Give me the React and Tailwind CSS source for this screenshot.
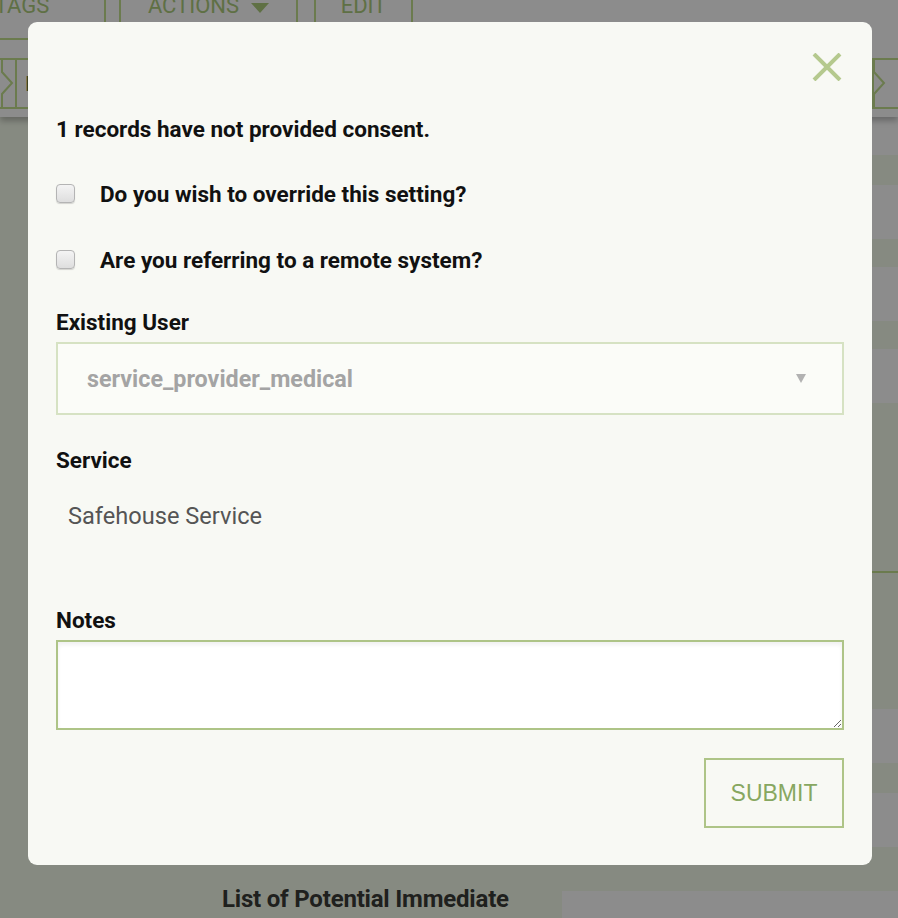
import React from "react";

const rows = [
  { h: "h-[38px]", bg: "bg-white" },
  { h: "h-[30px]", bg: "bg-[#f5fbec]" },
  { h: "h-[54px]", bg: "bg-white" },
  { h: "h-[28px]", bg: "bg-[#f5fbec]" },
  { h: "h-[54px]", bg: "bg-white" },
  { h: "h-[28px]", bg: "bg-[#f5fbec]" },
  { h: "h-[54px]", bg: "bg-white" },
  { h: "h-[170px]", bg: "bg-[#f5fbec] border-b-2 border-[#c3e08e]" },
  { h: "h-[136px]", bg: "bg-[#f5fbec]" },
  { h: "h-[54px]", bg: "bg-white" },
  { h: "h-[30px]", bg: "bg-[#f5fbec]" },
  { h: "h-[54px]", bg: "bg-white" },
  { h: "h-[44px]", bg: "bg-[#f5fbec]" },
];

const Checkbox = () => (
  <span className="block shrink-0 w-[19px] h-[19px] rounded-[4px] border border-[#b4b4b4] bg-gradient-to-b from-[#f4f4f4] to-[#dedede] shadow-[0_1px_1px_rgba(0,0,0,0.15)]" />
);

const Chevron = ({ className }) => (
  <svg width="14" height="50" viewBox="0 0 14 50" className={className}>
    <path d="M2 0 V14 L12 25 L2 36 V50" fill="none" stroke="#c3e08e" strokeWidth="2" />
  </svg>
);

const App = () => {
  return (
    <div className="relative w-[898px] h-[918px] overflow-hidden bg-[#f5fbec] font-['Roboto',sans-serif]">
      {/* page behind the dialog */}
      <div className="bg-white shadow-[0_4px_6px_rgba(0,0,0,0.25)] relative z-0">
        <div className="flex h-[40px] ml-[-62px] text-[22px] leading-[22px] text-[#adcc7d]">
          <div className="w-[168px] border-2 border-t-0 border-[#c3e08e] flex justify-center">
            <span className="-mt-[5px]">TAGS</span>
          </div>
          <div className="ml-[13px] w-[179px] border-2 border-t-0 border-[#c3e08e] flex justify-center gap-3">
            <span className="-mt-[5px]">ACTIONS</span>
            <svg width="18" height="10" viewBox="0 0 18 10" className="mt-[3px]"><path d="M0 0 H18 L9 10 Z" fill="#adcc7d" /></svg>
          </div>
          <div className="ml-[16px] w-[99px] border-2 border-t-0 border-[#c3e08e] flex justify-center">
            <span className="-mt-[5px]">EDIT</span>
          </div>
        </div>
        <div className="mt-[18px] h-[51px] border-y-2 border-[#c3e08e] flex items-stretch">
          <Chevron className="-mt-[2px]" />
          <div className="flex-1 flex items-center pl-[8px] text-[20px] text-[#5d7a3a] border-l-2 border-[#c3e08e] ml-[1px]">I</div>
          <div className="border-l-2 border-[#c3e08e] flex">
            <Chevron className="-mt-[2px] -ml-[2px]" />
            <div className="w-[12px]" />
          </div>
        </div>
        <div className="h-[8px]" />
      </div>

      <div className="flex">
        <div className="w-[562px] flex flex-col">
          <div className="h-[764px]" />
          <div className="pl-[222px] text-[24px] font-bold text-[#3a3b37] tracking-[-0.2px]">List of Potential Immediate</div>
        </div>
        <div className="flex-1 flex flex-col">
          {rows.map((r, i) => (
            <div key={i} className={`${r.h} ${r.bg} shrink-0`} />
          ))}
          <div className="h-[40px] bg-white" />
        </div>
      </div>

      {/* overlay */}
      <div className="absolute inset-0 bg-black/45" />

      {/* dialog */}
      <div className="absolute left-[28px] top-[22px] w-[844px] h-[843px] rounded-[9px] bg-[#f8f9f4] px-[28px] flex flex-col">
        <div className="flex justify-end pt-[31px] pr-[2px]">
          <svg width="30" height="28" viewBox="0 0 30 28">
            <path d="M2 1 L28 27 M28 1 L2 27" stroke="#b5c98e" strokeWidth="4" />
          </svg>
        </div>

        <p className="mt-[34px] text-[22.5px] leading-[28px] font-bold text-[#111]">1 records have not provided consent.</p>

        <label className="mt-[36px] flex items-center h-[28px]">
          <Checkbox />
          <span className="ml-[25px] mt-[3px] text-[22.5px] font-bold text-[#111]">Do you wish to override this setting?</span>
        </label>

        <label className="mt-[38px] flex items-center h-[28px]">
          <Checkbox />
          <span className="ml-[25px] mt-[3px] text-[22.5px] font-bold text-[#111]">Are you referring to a remote system?</span>
        </label>

        <div className="mt-[35px] text-[22.5px] leading-[28px] font-bold text-[#111]">Existing User</div>
        <div className="mt-[6px] h-[73px] border-2 border-[#d6e2c3] bg-[#fbfcf8] flex items-center justify-between pl-[29px] pr-[36px]">
          <span className="mt-[2px] text-[23.3px] font-bold text-[#a4a4a4]">service_provider_medical</span>
          <svg width="10" height="9" viewBox="0 0 10 9"><path d="M0 0 H10 L5 9 Z" fill="#b2b2b2" /></svg>
        </div>

        <div className="mt-[31px] text-[22.5px] leading-[28px] font-bold text-[#111]">Service</div>
        <div className="mt-[28px] pl-[12px] text-[23.6px] leading-[28px] text-[#555]">Safehouse Service</div>

        <div className="mt-[76px] text-[22.5px] leading-[28px] font-bold text-[#111]">Notes</div>
        <textarea className="mt-[6px] h-[90px] w-full border-2 border-[#aec487] bg-white shadow-[inset_0_3px_4px_rgba(0,0,0,0.06)] outline-none resize-y" />

        <div className="mt-[28px] flex justify-end">
          <button className="w-[140px] h-[70px] border-2 border-[#aec487] font-['Liberation_Sans',Arial,sans-serif] text-[23px] text-[#87a760]">SUBMIT</button>
        </div>
      </div>
    </div>
  );
};

export default App;
